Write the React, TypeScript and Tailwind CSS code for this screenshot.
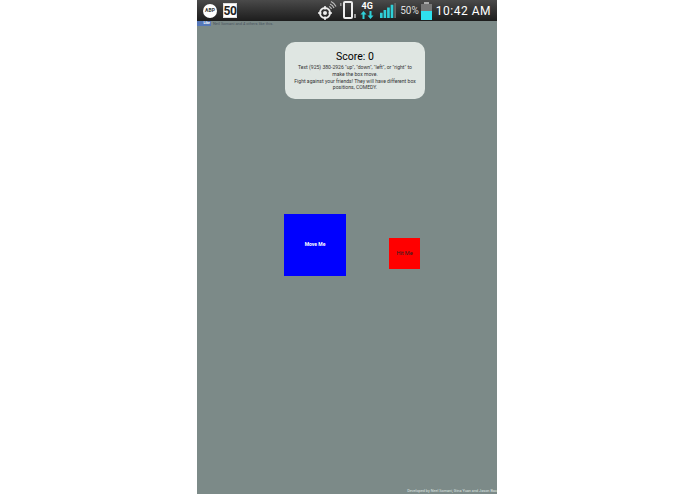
function Target() {
  return (
    <svg width="24" height="21" viewBox="0 0 24 21" className="shrink-0">
      <circle cx="9" cy="13" r="5" fill="none" stroke="#eee" strokeWidth="2" />
      <circle cx="9" cy="13" r="2" fill="#eee" />
      <path d="M9 6v3.500M9 16.500V20M2 13h3.500M12.500 13H16" stroke="#eee" strokeWidth="1.6" />
      <path d="M13 6.500a4 4 0 0 1 2.500 2.500M14 4a7 7 0 0 1 4 4M15 1.500a10 10 0 0 1 5 5" fill="none" stroke="#bbb" strokeWidth="1.2" />
    </svg>
  );
}

function Phone() {
  return (
    <svg width="18" height="20" viewBox="0 0 18 20" className="shrink-0">
      <path d="M0 2h1.500v3H0z" fill="#999" />
      <rect x="4" y="1" width="8" height="16" rx="1" fill="none" stroke="#eee" strokeWidth="2" />
      <rect x="14" y="13" width="2" height="4" fill="#999" />
    </svg>
  );
}

function Signal() {
  return (
    <svg width="16" height="17" viewBox="0 0 18 17" className="shrink-0">
      <path d="M0 11h3v6H0zM4 8h3v9H4zM8 5h3v12H8zM12 2h3v15h-3z" fill="#2fd0d8" />
      <path d="M16 0h2v17h-2z" fill="#666" />
    </svg>
  );
}

function Network() {
  return (
    <div className="flex w-[18px] shrink-0 flex-col items-center">
      <span className="text-[9px] leading-[9px] font-bold text-white">4G</span>
      <svg width="14" height="8" viewBox="0 0 14 8">
        <path d="M3.500 0L6.500 3.500H4.500V8h-2V3.500H.5z" fill="#2fd0d8" />
        <path d="M10.500 8L7.500 4.500h2V0h2v4.500h2z" fill="#2fd0d8" />
      </svg>
    </div>
  );
}

function Battery() {
  return (
    <div className="flex h-[18px] w-[11px] shrink-0 flex-col items-center">
      <div className="h-[2px] w-[5px] bg-[#aaa]" />
      <div className="flex w-full flex-1 flex-col bg-[#777]">
        <div className="h-[7px]" />
        <div className="flex-1 bg-[#2fe0ee]" />
      </div>
    </div>
  );
}

function StatusBar() {
  return (
    <div className="flex h-[21px] items-center bg-gradient-to-b from-[#4a4a4a] to-[#1d1d1d] pl-[6px] pr-[6px]">
      <div className="flex h-[14px] w-[14px] items-center justify-center rounded-full bg-white text-[5px] font-bold text-[#333]">
        ABP
      </div>
      <div className="ml-[6px] flex h-[15px] w-[14px] items-center justify-center border border-[#ddd] bg-white text-[12px] font-bold tracking-[-0.5px] text-[#222]">
        50
      </div>
      <div className="ml-auto flex items-center">
        <Target />
        <Phone />
        <Network />
        <div className="ml-[4px]">
          <Signal />
        </div>
        <span className="ml-[4px] text-[10px] text-[#ddd]">50%</span>
        <div className="ml-[2px]">
          <Battery />
        </div>
        <span className="ml-[4px] text-[12px] tracking-[0.5px] text-white">10:42 AM</span>
      </div>
    </div>
  );
}

export default function App() {
  return (
    <div className="flex h-[494px] w-[695px] bg-white pl-[197px] font-['Roboto',sans-serif]">
      <div className="relative flex w-[300px] flex-col bg-[#7c8a88]">
        <StatusBar />

        {/* facebook like strip */}
        <div className="flex h-[5px] items-center gap-[2px] overflow-hidden">
          <div className="flex h-[5px] w-[14px] items-center justify-end bg-[#5577b8] pr-[1px] text-[3.500px] font-bold text-white">
            Like
          </div>
          <span className="text-[4px] leading-[5px] text-[#4a5560]">Neil Somani and 4 others like this.</span>
        </div>

        {/* score card */}
        <div className="ml-[88px] mt-[16px] flex h-[57px] w-[140px] flex-col items-center rounded-[10px] bg-[#dfe6e2] px-[9px] pt-[8px] text-center">
          <h1 className="text-[10.500px] leading-[13px] text-black">Score: 0</h1>
          <p className="mt-[1px] text-[5.100px] leading-[6.500px] text-[#333]">
            Text (925) 380-2926 "up", "down", "left", or "right" to make the box move.
          </p>
          <p className="mt-[0.5px] text-[5.100px] leading-[6.500px] text-[#333]">
            Fight against your friends! They will have different box positions, COMEDY.
          </p>
        </div>

        {/* game boxes sit on a free canvas */}
        <div className="absolute left-[87px] top-[214px] flex h-[62px] w-[62px] items-center justify-center bg-[#0000ff] text-[5px] font-bold text-white">
          Move Me
        </div>
        <div className="absolute left-[192px] top-[238px] flex h-[31px] w-[31px] items-center justify-center bg-[#ff0000] text-[5.500px] text-[#222]">
          Hit Me
        </div>

        <div className="mb-[1px] mt-auto h-[5px] overflow-hidden whitespace-nowrap text-right text-[3.800px] leading-[5px] text-[#dfe6e2]">
          Developed by Neel Somani, Gina Yuan and Jason Bao
        </div>
      </div>
    </div>
  );
}
